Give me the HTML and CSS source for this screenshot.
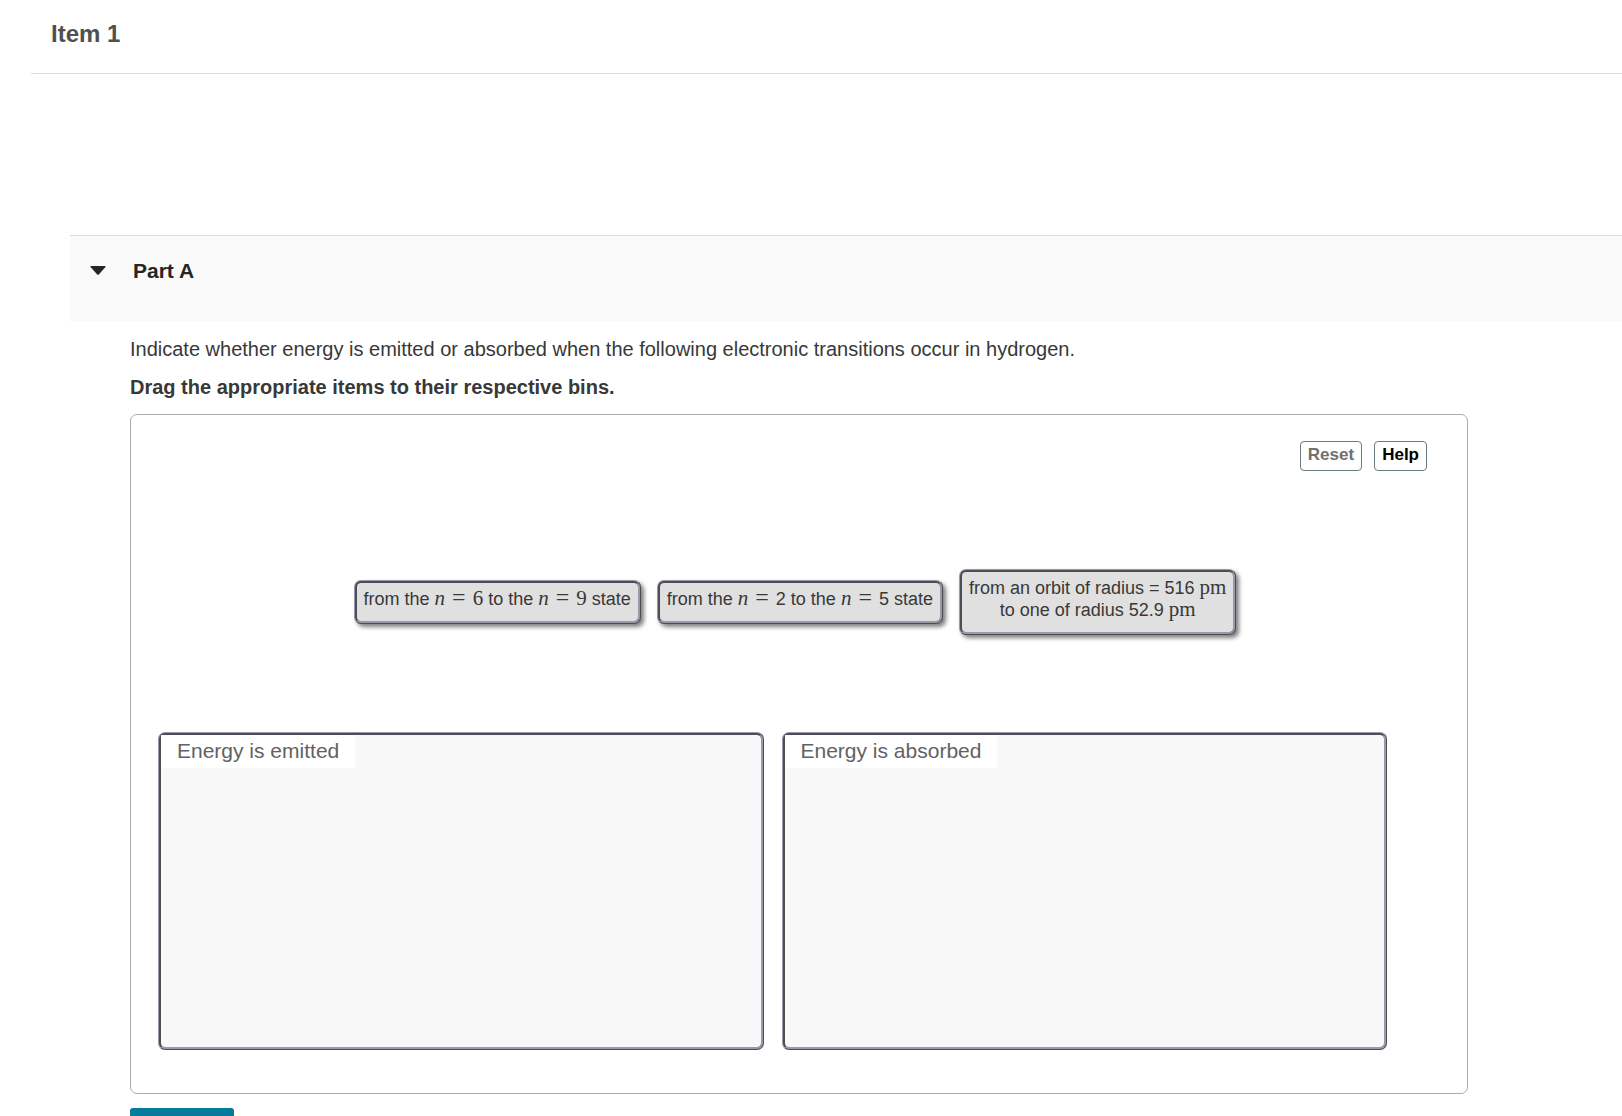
FILE: index.html
```html
<!DOCTYPE html>
<html lang="en">
<head>
  <meta charset="UTF-8">
  <title>Item 1</title>
  <link rel="stylesheet" href="styles.css">
</head>
<body>

  <header class="item-header">
    <h1>Item 1</h1>
  </header>

  <section class="part">
    <div class="part-header">
      <button class="toggle" type="button" aria-label="Collapse Part A" aria-expanded="true">
        <svg width="16" height="10" viewBox="0 0 16 10"><path d="M1 0H15Q16 .4 15.5 1L9 8.200Q8 9.200 7 8.200L.5 1Q0 .4 1 0Z" fill="#252525"/></svg>
      </button>
      <h2>Part A</h2>
    </div>

    <div class="part-body">
      <p class="question">Indicate whether energy is emitted or absorbed when the following electronic transitions occur in hydrogen.</p>
      <p class="instructions">Drag the appropriate items to their respective bins.</p>

      <div class="sorter">
        <div class="tools">
          <button class="tool" type="button" disabled>Reset</button>
          <button class="tool" type="button">Help</button>
        </div>

        <!-- Draggable items -->
        <div class="items">
          <div class="item" draggable="true">from the <span class="math"><i>n</i><span class="eq">=</span>6</span> to the <span class="math"><i>n</i><span class="eq">=</span>9</span> state</div>
          <div class="item" draggable="true">from the <span class="math"><i>n</i><span class="eq">=</span></span>2 to the <span class="math"><i>n</i><span class="eq">=</span></span>5 state</div>
          <div class="item" draggable="true">from an orbit of radius = 516 <span class="math">pm</span><br>to one of radius 52.9 <span class="math">pm</span></div>
        </div>

        <!-- Bins -->
        <div class="bins">
          <div class="bin"><h3>Energy is emitted</h3></div>
          <div class="bin"><h3>Energy is absorbed</h3></div>
        </div>
      </div>

      <button class="submit" type="button" aria-label="Submit"></button>
    </div>
  </section>

</body>
</html>
```

FILE: styles.css
```css
* {
  box-sizing: border-box;
}

html {
  overflow: hidden;
}

body {
  margin: 0;
  font-family: "Liberation Sans", Arial, sans-serif;
  background: #fff;
  color: #383838;
}

h1, h2, h3, p {
  margin: 0;
}

button {
  font-family: inherit;
  cursor: pointer;
}

.item-header {
  margin-left: 31px;
  padding: 20px 20px 25px;
  border-bottom: 1px solid #ddd;
}

.item-header h1 {
  font-size: 24px;
  line-height: 28px;
  color: #505050;
}

.part {
  margin-top: 161px;
  margin-left: 70px;
}

.part-header {
  display: flex;
  align-items: flex-start;
  gap: 27px;
  height: 86px;
  padding: 21px 20px;
  background: #f9f9f9;
  border-top: 1px solid #ddd;
}

.part-header h2 {
  font-size: 21px;
  line-height: 28px;
  color: #252525;
}

.toggle {
  display: flex;
  align-items: center;
  height: 28px;
  padding: 0;
  border: none;
  background: none;
}

.part-body {
  padding: 15px 154px 0 60px;
}

.question,
.instructions {
  font-size: 20px;
  line-height: 26px;
}

.question {
  margin-bottom: 12px;
}

.instructions {
  margin-bottom: 14px;
  font-weight: bold;
}

.sorter {
  padding: 26px 27px 43px;
  border: 1px solid #aaa;
  border-radius: 7px;
}

.tools {
  display: flex;
  justify-content: flex-end;
  gap: 12px;
  padding-right: 13px;
}

.tool {
  height: 30px;
  padding: 0 7px 2px;
  font-size: 17px;
  font-weight: bold;
  color: #000;
  background: #fff;
  border: 1px solid #6c7a82;
  border-radius: 4px;
}

.tool:disabled {
  color: #707070;
}

.items {
  display: flex;
  justify-content: center;
  align-items: center;
  gap: 16px;
  height: 261px;
  padding-right: 8px;
}

.item {
  padding: 5px 7px 11px;
  font-size: 18px;
  line-height: 22px;
  text-align: center;
  background: #e0e0e0;
  border: 3px ridge #9999aa;
  border-radius: 7px;
  box-shadow: 3px 3px 4px rgba(0, 0, 0, 0.5);
  cursor: move;
}

.math {
  font-family: "Liberation Serif", "Times New Roman", serif;
  font-size: 21px;
  line-height: 1;
}

.eq {
  padding: 0 7px;
  font-size: 24px;
  line-height: 0;
}

.bins {
  display: flex;
  gap: 18px;
  padding-right: 53px;
}

.bin {
  flex: 1;
  height: 318px;
  background: #f8f8f8;
  border: 3px ridge #9999aa;
  border-radius: 7px;
}

.bin h3 {
  width: fit-content;
  padding: 3px 16px 4px;
  font-size: 21px;
  font-weight: normal;
  line-height: 26px;
  color: #626262;
  background: #fff;
}

.submit {
  display: block;
  width: 104px;
  height: 40px;
  margin-top: 14px;
  background: #047a9c;
  border: none;
  border-radius: 3px;
}
```
